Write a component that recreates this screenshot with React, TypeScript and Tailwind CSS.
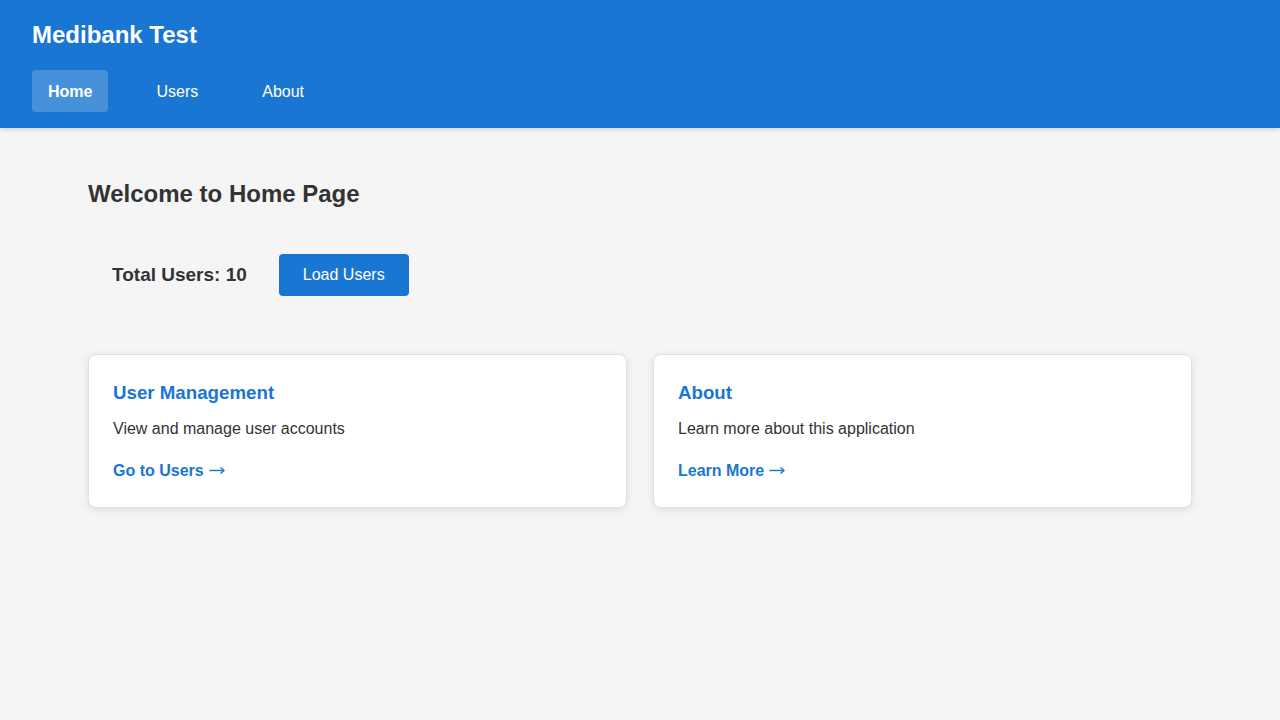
import React from "react";

type Card = {
  title: string;
  text: string;
  link: string;
};

const cards: Card[] = [
  { title: "User Management", text: "View and manage user accounts", link: "Go to Users" },
  { title: "About", text: "Learn more about this application", link: "Learn More" },
];

const navItems = ["Home", "Users", "About"];

function Arrow() {
  return (
    <svg
      width="16"
      height="9"
      viewBox="0 0 16 9"
      fill="none"
      stroke="currentColor"
      strokeWidth="1.4"
      className="ml-[5px] inline-block align-[1px]"
    >
      <path d="M0.5 4.5H15" />
      <path d="M11.5 1.5L15 4.5L11.5 7.5" strokeLinejoin="miter" />
    </svg>
  );
}

function Header() {
  return (
    <header className="relative z-10 bg-[#1976d2] px-8 pt-[17px] pb-4 text-white shadow-[0_2px_4px_rgba(0,0,0,0.12)]">
      <h1 className="text-[24px] font-bold leading-[36px]">Medibank Test</h1>
      <nav className="mt-[17px] flex gap-8">
        {navItems.map((item, i) => (
          <a
            key={item}
            href="#"
            className={
              i === 0
                ? "rounded bg-white/20 px-4 pt-[10px] pb-[8px] text-base font-bold leading-6"
                : "rounded px-4 pt-[10px] pb-[8px] text-base leading-6"
            }
          >
            {item}
          </a>
        ))}
      </nav>
    </header>
  );
}

export default function App() {
  return (
    <div
      className="min-h-[720px] bg-[#f5f5f5] text-[#333] leading-normal"
      style={{ fontFamily: '"Liberation Sans", Arial, Helvetica, sans-serif' }}
    >
      <Header />
      <main className="px-[88px] pt-12 pb-12">
        <h2 className="text-[24px] font-bold leading-[36px]">Welcome to Home Page</h2>

        <div className="mt-[18px] flex items-center gap-8 p-6">
          <h3 className="text-[19px] font-bold leading-[28px]">Total Users: 10</h3>
          <button className="rounded bg-[#1976d2] px-6 py-[9px] text-base leading-6 text-white">
            Load Users
          </button>
        </div>

        <div className="mt-[34px] grid grid-cols-2 gap-[26px]">
          {cards.map((card) => (
            <div
              key={card.title}
              className="rounded-lg border border-[#e0e0e0] bg-white p-6 shadow-[0_2px_8px_rgba(0,0,0,0.1)]"
            >
              <h3 className="text-[18.72px] font-bold leading-[28px] text-[#1976d2]">
                {card.title}
              </h3>
              <p className="mt-[10px] text-base leading-6">{card.text}</p>
              <a href="#" className="mt-[18px] block text-base font-bold leading-6 text-[#1976d2]">
                {card.link}
                <Arrow />
              </a>
            </div>
          ))}
        </div>
      </main>
    </div>
  );
}
